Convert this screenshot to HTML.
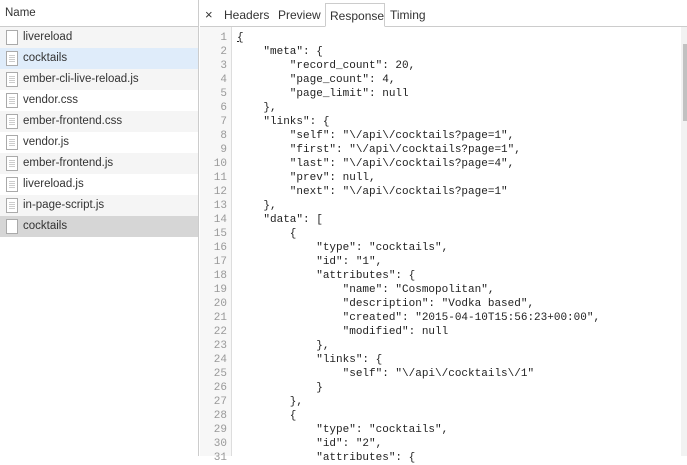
<!DOCTYPE html>
<html><head><meta charset="utf-8"><style>
*{margin:0;padding:0;box-sizing:border-box}
body{width:687px;height:456px;overflow:hidden;background:#fff;font-family:"Liberation Sans",sans-serif;font-size:12px;color:#333;position:relative}
#left{position:absolute;left:0;top:0;width:199px;height:456px;border-right:1px solid #ccc}
#lh{height:27px;border-bottom:1px solid #ccc;padding:7px 0 0 5px;color:#333;font-size:11.5px}
.row{height:21px;line-height:21px;padding-left:23px;position:relative;color:#333;font-size:11.5px}
.row.g{background:#f5f5f5}
.row.b{background:#dfecfa}
.row.s{background:#d6d6d6}
.ic{position:absolute;left:6px;top:3px;width:12px;height:15px;border:1px solid #aaa;background:#fff}
.ic.l::after{content:"";position:absolute;left:2px;top:3px;width:6px;height:7px;background:repeating-linear-gradient(#ccc 0 1px,transparent 1px 2px)}
#tabs{position:absolute;left:200px;top:0;right:0;height:27px;border-bottom:1px solid #ccc}
.t{position:absolute;top:8px;font-size:12px;color:#333}
#resp{position:absolute;left:325px;top:3px;width:60px;height:24px;border:1px solid #ccc;border-bottom:1px solid #fff;background:#fff;padding:5px 0 0 4px;font-size:12px}
#gut{position:absolute;left:200px;top:27px;width:32px;height:429px;background:#f7f7f7;border-right:1px solid #ddd}
#code{position:absolute;left:200px;top:31px;font-family:"Liberation Mono",monospace;font-size:11px;line-height:14px;white-space:pre;color:#222}
.ln{display:inline-block;width:27px;text-align:right;color:#999;margin-right:10px}
#sb{position:absolute;left:681px;top:27px;width:6px;height:429px;background:#f2f2f2}
#th{position:absolute;left:683px;top:44px;width:4px;height:77px;background:#c1c1c1}
</style></head><body>
<div id="left">
<div id="lh">Name</div>
<div class="row g"><span class="ic"></span>livereload</div>
<div class="row b"><span class="ic l"></span>cocktails</div>
<div class="row g"><span class="ic l"></span>ember-cli-live-reload.js</div>
<div class="row"><span class="ic l"></span>vendor.css</div>
<div class="row g"><span class="ic l"></span>ember-frontend.css</div>
<div class="row"><span class="ic l"></span>vendor.js</div>
<div class="row g"><span class="ic l"></span>ember-frontend.js</div>
<div class="row"><span class="ic l"></span>livereload.js</div>
<div class="row g"><span class="ic l"></span>in-page-script.js</div>
<div class="row s"><span class="ic"></span>cocktails</div>
</div>
<div id="tabs"></div>
<div class="t" style="left:205px;top:7px;font-size:13px">×</div>
<div class="t" style="left:224px">Headers</div>
<div class="t" style="left:278px">Preview</div>
<div id="resp">Response</div>
<div class="t" style="left:390px">Timing</div>
<div id="gut"></div>
<div id="code"><span class="ln">1</span><u>{</u>
<span class="ln">2</span>    "meta": {
<span class="ln">3</span>        "record_count": 20,
<span class="ln">4</span>        "page_count": 4,
<span class="ln">5</span>        "page_limit": null
<span class="ln">6</span>    },
<span class="ln">7</span>    "links": {
<span class="ln">8</span>        "self": "\/api\/cocktails?page=1",
<span class="ln">9</span>        "first": "\/api\/cocktails?page=1",
<span class="ln">10</span>        "last": "\/api\/cocktails?page=4",
<span class="ln">11</span>        "prev": null,
<span class="ln">12</span>        "next": "\/api\/cocktails?page=1"
<span class="ln">13</span>    },
<span class="ln">14</span>    "data": [
<span class="ln">15</span>        {
<span class="ln">16</span>            "type": "cocktails",
<span class="ln">17</span>            "id": "1",
<span class="ln">18</span>            "attributes": {
<span class="ln">19</span>                "name": "Cosmopolitan",
<span class="ln">20</span>                "description": "Vodka based",
<span class="ln">21</span>                "created": "2015-04-10T15:56:23+00:00",
<span class="ln">22</span>                "modified": null
<span class="ln">23</span>            },
<span class="ln">24</span>            "links": {
<span class="ln">25</span>                "self": "\/api\/cocktails\/1"
<span class="ln">26</span>            }
<span class="ln">27</span>        },
<span class="ln">28</span>        {
<span class="ln">29</span>            "type": "cocktails",
<span class="ln">30</span>            "id": "2",
<span class="ln">31</span>            "attributes": {</div>
<div id="sb"></div><div id="th"></div>
</body></html>
